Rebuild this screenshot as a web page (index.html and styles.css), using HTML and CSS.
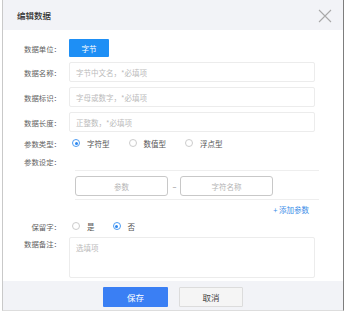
FILE: index.html
```html
<!DOCTYPE html>
<html lang="zh-CN">
<head>
  <meta charset="UTF-8" />
  <title>编辑数据</title>
  <link rel="stylesheet" href="styles.css">
</head>
<body>
  <div class="modal">
    <!-- Header -->
    <div class="modal-header">
      <span class="modal-title">编辑数据</span>
      <svg class="close" width="14" height="14" viewBox="0 0 14 14">
        <path d="M1 1 L13 13 M13 1 L1 13" stroke="#a9a9a9" stroke-width="1.1" fill="none"/>
      </svg>
    </div>

    <!-- Form -->
    <div class="modal-body">
      <div class="row row-unit">
        <label class="label">数据单位：</label>
        <span class="btn-unit">字节</span>
      </div>
      <div class="row row-input">
        <label class="label">数据名称：</label>
        <div class="input">字节中文名，*必填项</div>
      </div>
      <div class="row row-input">
        <label class="label">数据标识：</label>
        <div class="input">字母或数字，*必填项</div>
      </div>
      <div class="row row-input">
        <label class="label">数据长度：</label>
        <div class="input">正整数，*必填项</div>
      </div>
      <div class="row row-radio">
        <label class="label">参数类型：</label>
        <div class="radios">
          <span class="radio checked"><i></i>字符型</span>
          <span class="radio"><i></i>数值型</span>
          <span class="radio"><i></i>浮点型</span>
        </div>
      </div>
      <div class="row row-radio">
        <label class="label">参数设定：</label>
      </div>

      <div class="params">
        <div class="param-box">参数</div>
        <span class="dash">--</span>
        <div class="param-box">字符名称</div>
      </div>
      <div class="add-param">+ 添加参数</div>

      <div class="row row-reserved">
        <label class="label">保留字：</label>
        <div class="radios">
          <span class="radio"><i></i>是</span>
          <span class="radio checked"><i></i>否</span>
        </div>
      </div>
      <div class="row row-note">
        <label class="label">数据备注：</label>
        <div class="textarea">选填项</div>
      </div>
    </div>

    <!-- Footer -->
    <div class="modal-footer">
      <span class="btn btn-save">保存</span>
      <span class="btn btn-cancel">取消</span>
    </div>
  </div>
</body>
</html>
```

FILE: styles.css
```css
* {
  box-sizing: border-box;
}

body {
  margin: 0;
  font-family: "Noto Sans CJK SC", "Noto Sans", sans-serif;
  background: #fff;
  color: #555;
}

.modal {
  width: 342px;
  margin: 0 0 0 2px;
  border-left: 1px solid #c9c9c9;
  border-right: 1px solid #7d7d7d;
  border-bottom: 1px solid #ddd;
}

.modal-header {
  height: 30px;
  background: #f2f3f7;
  display: flex;
  align-items: center;
  justify-content: space-between;
  padding: 0 11px 0 14px;
}

.modal-title {
  font-size: 8.5px;
  color: #333;
  font-weight: 500;
}

.close {
  margin-top: 1px;
}

.modal-body {
  padding: 9px 0 3px 0;
  font-size: 7.5px;
}

.row {
  display: flex;
  align-items: center;
}

.label {
  width: 66px;
  flex-shrink: 0;
  text-align: right;
  padding-right: 8px;
  color: #5f5f5f;
  font-size: 7.4px;
}

.row-unit {
  height: 18px;
}

.btn-unit {
  width: 40px;
  height: 18px;
  background: #1e8ff5;
  color: #fff;
  display: flex;
  align-items: center;
  justify-content: center;
  border-radius: 1px;
}

.row-input {
  margin-top: 5px;
}

.input {
  width: 246px;
  height: 20px;
  border: 1px solid #ececec;
  border-radius: 2px;
  padding-left: 6px;
  display: flex;
  align-items: center;
  color: #bbb;
}

.row-radio {
  height: 16px;
  margin-top: 3px;
}

.row-radio + .row-radio {
  margin-top: 2px;
}

.radios {
  display: flex;
  padding-left: 3px;
}

.radio {
  display: flex;
  align-items: center;
  color: #555;
  margin-right: 19px;
}

.radio i {
  width: 8px;
  height: 8px;
  border: 1px solid #ccc;
  border-radius: 50%;
  margin-right: 7px;
  position: relative;
}

.radio.checked i {
  border-color: #4d9cf3;
}

.radio.checked i::after {
  content: "";
  position: absolute;
  left: 1.5px;
  top: 1.5px;
  width: 3px;
  height: 3px;
  border-radius: 50%;
  background: #2b87f0;
}

.params {
  margin: 1px 0 0 72px;
  width: 244px;
  border-top: 1px solid #eee;
  border-bottom: 1px solid #eee;
  padding: 5px 0 3px 0;
  display: flex;
  align-items: center;
}

.param-box {
  width: 93px;
  height: 20px;
  border: 1px solid #c8c8c8;
  border-radius: 3px;
  display: flex;
  align-items: center;
  justify-content: center;
  color: #b5b5b5;
}

.dash {
  width: 12px;
  text-align: center;
  color: #888;
  font-size: 7px;
  letter-spacing: -1px;
}

.add-param {
  height: 18px;
  width: 306px;
  display: flex;
  align-items: center;
  justify-content: flex-end;
  color: #3b8de8;
}

.row-reserved {
  height: 16px;
}

.row-reserved .radio {
  margin-right: 18px;
}

.row-note {
  margin-top: 3px;
  align-items: flex-start;
}

.row-note .label {
  margin-top: 1px;
}

.textarea {
  width: 246px;
  height: 41px;
  border: 1px solid #ececec;
  border-radius: 2px;
  padding: 4px 6px;
  color: #bbb;
}

.modal-footer {
  height: 29px;
  background: #f2f3f7;
  display: flex;
  justify-content: center;
  align-items: flex-start;
  padding-top: 6px;
  gap: 11px;
}

.btn {
  height: 20px;
  display: flex;
  align-items: center;
  justify-content: center;
  font-size: 8.5px;
  border-radius: 1px;
}

.btn-save {
  width: 65px;
  background: #3a7ff4;
  color: #fff;
}

.btn-cancel {
  width: 64px;
  background: #f5f5f5;
  border: 1px solid #dcdcdc;
  color: #444;
}
```
